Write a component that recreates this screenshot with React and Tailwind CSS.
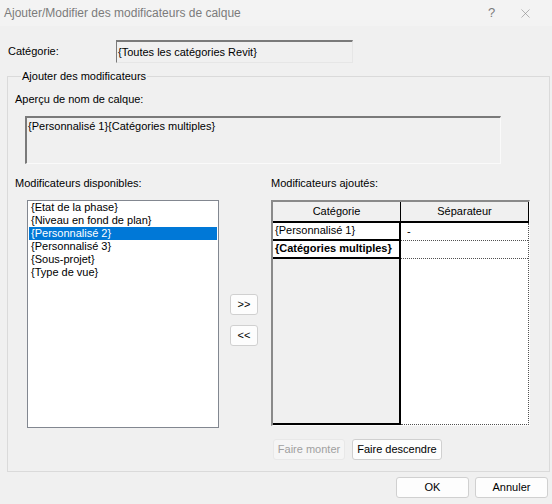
import { X } from "lucide-react";

const available = [
  "{Etat de la phase}",
  "{Niveau en fond de plan}",
  "{Personnalisé 2}",
  "{Personnalisé 3}",
  "{Sous-projet}",
  "{Type de vue}",
];

const added = [
  { name: "{Personnalisé 1}", sep: "-", bold: false },
  { name: "{Catégories multiples}", sep: "", bold: true },
];

function WinButton({ children, className = "", disabled }) {
  return (
    <button
      type="button"
      disabled={disabled}
      className={`h-[21px] rounded-[3px] border text-[11px] leading-none ${
        disabled ? "border-[#e8e8e8] bg-[#f5f5f5] text-[#a0a0a0]" : "border-[#d0d0d0] bg-[#fdfdfd] text-black"
      } ${className}`}
    >
      {children}
    </button>
  );
}

export default function App() {
  const selected = 2;

  return (
    <div
      className="w-[552px] h-[504px] bg-[#f0f0f0] flex flex-col text-[11px] text-black overflow-hidden"
      style={{ fontFamily: '"Liberation Sans", Arial, sans-serif' }}
    >
      {/* title bar */}
      <div className="h-[26px] bg-[#f3f3f3] flex items-center pl-[4px] text-[12px] text-[#7b7b7b]">
        <span className="flex-1">Ajouter/Modifier des modificateurs de calque</span>
        <span className="w-[14px] text-[13px] mr-[16px]">?</span>
        <X size={15} strokeWidth={1} className="mr-[19px] text-[#8a8a8a]" />
      </div>

      {/* category row */}
      <div className="flex items-center mt-[14px] pl-[8px]">
        <span className="w-[108px]">Catégorie:</span>
        <div className="w-[237px] h-[23px] border-t-2 border-l border-[#7a7a7a] border-b border-r border-b-[#e6e6e6] border-r-[#e6e6e6] flex items-center pl-[1px]">
          {"{Toutes les catégories Revit}"}
        </div>
      </div>

      {/* group box */}
      <fieldset className="ml-[7px] mt-[5px] w-[543px] h-[404px] border border-[#dadada] pl-[7px]">
        <legend className="ml-[6px] px-[1px] text-[11px]">Ajouter des modificateurs</legend>

        <div className="mt-[6px]">Aperçu de nom de calque:</div>
        <div className="ml-[10px] mt-[9px] w-[476px] h-[48px] border-t-2 border-l-2 border-[#7a7a7a] border-b border-r border-b-[#fafafa] border-r-[#fafafa] pl-[1px]">
          {"{Personnalisé 1}{Catégories multiples}"}
        </div>

        <div className="flex mt-[11px]">
          {/* available */}
          <div className="flex flex-col">
            <div>Modificateurs disponibles:</div>
            <div className="ml-[12px] mt-[8px] w-[192px] h-[228px] bg-white border border-[#828790] px-[1px]">
              {available.map((item, i) => (
                <div
                  key={item}
                  className={`h-[13px] leading-[13px] pl-[2px] ${i === selected ? "bg-[#0078d7] text-white" : ""}`}
                >
                  {item}
                </div>
              ))}
            </div>
          </div>

          {/* move buttons */}
          <div className="flex flex-col gap-[10px] ml-[11px] mt-[119px]">
            <WinButton className="w-[28px]">&gt;&gt;</WinButton>
            <WinButton className="w-[28px]">&lt;&lt;</WinButton>
          </div>

          {/* added */}
          <div className="flex flex-col ml-[13px]">
            <div>Modificateurs ajoutés:</div>
            <div className="mt-[8px] w-[259px] h-[226px] border-t-2 border-l-2 border-[#8a8a8a] border-r border-b border-r-[#fbfbfb] border-b-[#fbfbfb] flex flex-col">
              <div className="flex h-[21px] border-b-2 border-black">
                <div className="w-[128px] flex items-center justify-center border-r border-black">Catégorie</div>
                <div className="flex-1 flex items-center justify-center border-r border-black">Séparateur</div>
              </div>
              <div className="flex flex-1">
                <div className="w-[128px] flex flex-col border-r-2 border-b-2 border-black">
                  {added.map((row) => (
                    <div
                      key={row.name}
                      className={`h-[18px] bg-white border-b-2 border-black flex items-center pl-[2px] ${
                        row.bold ? "font-bold" : ""
                      }`}
                    >
                      {row.name}
                    </div>
                  ))}
                </div>
                <div className="flex-1 flex flex-col bg-white border-r border-b border-dotted border-[#505050]">
                  {added.map((row) => (
                    <div key={row.name} className="h-[18px] border-b border-dotted border-[#505050] flex items-center pl-[6px]">
                      {row.sep}
                    </div>
                  ))}
                </div>
              </div>
            </div>
            <div className="flex gap-[7px] mt-[13px] ml-[2px]">
              <WinButton disabled className="w-[72px] h-[20px]">Faire monter</WinButton>
              <WinButton className="w-[90px] h-[20px]">Faire descendre</WinButton>
            </div>
          </div>
        </div>
      </fieldset>

      {/* dialog buttons */}
      <div className="flex justify-end gap-[6px] mt-[5px] pr-[4px]">
        <WinButton className="w-[73px]">OK</WinButton>
        <WinButton className="w-[73px]">Annuler</WinButton>
      </div>
    </div>
  );
}
